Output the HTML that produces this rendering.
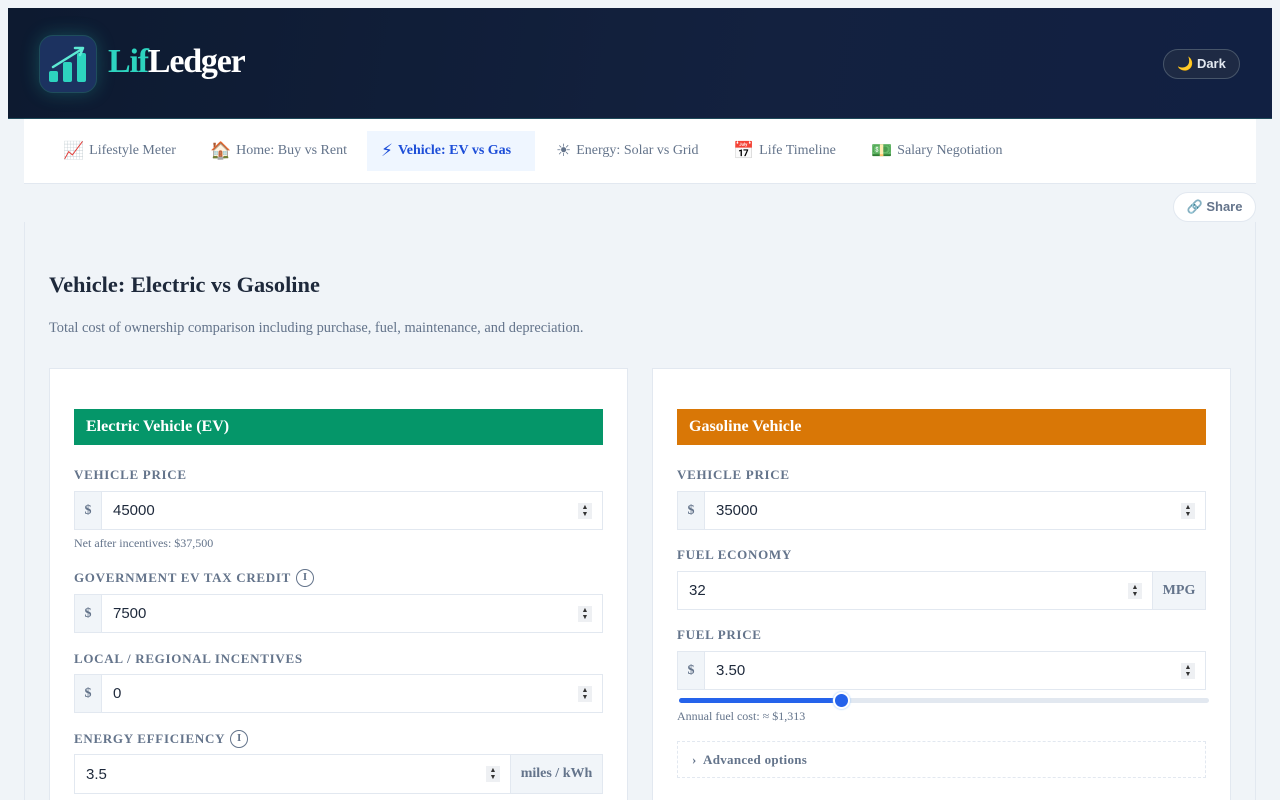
<!DOCTYPE html>
<html style="width:1280px;height:800px;overflow:hidden"><head><meta charset="utf-8"><style>
*{box-sizing:border-box;margin:0;padding:0}
body{width:1280px;height:800px;overflow:hidden;background:#f0f4f8;font-family:"Liberation Serif",serif;position:relative}
.abs{position:absolute}
header{position:absolute;left:8px;top:8px;width:1264px;height:111px;background:linear-gradient(100deg,#0d1a30,#13213f 60%,#112042);border-bottom:1px solid #1f4a5a}
.logo{left:31px;top:27px;width:58px;height:58px;border-radius:14px;background:#1c3260;border:1px solid #1f4d5c;box-shadow:0 0 18px rgba(45,212,191,.25)}
.brand{left:100px;top:35px;font-size:34px;font-weight:bold;color:#fff;letter-spacing:-1.2px}
.brand span{color:#2dd4bf}
.dark{left:1155px;top:41px;width:77px;height:30px;border-radius:15px;border:1px solid #475569;background:#1e2a44;color:#e2e8f0;font:bold 13px "Liberation Sans",sans-serif;display:flex;align-items:center;justify-content:center}
nav{position:absolute;left:24px;top:119px;width:1232px;height:65px;background:#fff;border-bottom:1px solid #e2e8f0}
.tab{position:absolute;top:12px;height:40px;display:flex;align-items:center;font-size:14px;color:#64748b;padding:0 14px}
.tab i{font-style:normal;font-size:17px;margin-right:5px;font-family:"DejaVu Sans",sans-serif}
.tab.on{background:#eff6ff;color:#1d4ed8;font-weight:bold}
.share{left:1173px;top:192px;width:83px;height:30px;border-radius:15px;background:#fff;border:1px solid #e2e8f0;color:#64748b;font:bold 13px "Liberation Sans",sans-serif;display:flex;align-items:center;justify-content:center}
.panel{left:24px;top:222px;width:1232px;height:600px;border-left:1px solid #e2e8f0;border-right:1px solid #e2e8f0}
h2{position:absolute;left:49px;top:272px;font-size:22.4px;color:#1e293b}
.desc{left:49px;top:320px;font-size:14.4px;color:#64748b}
.card{position:absolute;top:368px;width:579px;height:440px;background:#fff;border:1px solid #e2e8f0}
.bar{position:absolute;left:24px;top:40px;width:529px;height:36px;color:#fff;font-size:16px;font-weight:bold;padding-left:12px;line-height:36px}
.lbl{position:absolute;left:24px;font-size:13px;font-weight:bold;color:#64748b;letter-spacing:0.7px;display:flex;align-items:center}
.lbl b{display:inline-block;width:18px;height:18px;border:1.5px solid #64748b;border-radius:50%;font-size:11px;text-align:center;line-height:15px;margin-left:5px;letter-spacing:0}
.inp{position:absolute;left:24px;width:529px;height:39px;border:1px solid #e2e8f0;display:flex;background:#fff}
.pre{width:27px;background:#f1f5f9;border-right:1px solid #e2e8f0;color:#64748b;font-weight:bold;font-size:14px;display:flex;align-items:center;justify-content:center}
.val{flex:1;font:15px "Liberation Sans",sans-serif;color:#1e293b;padding-left:11px;display:flex;align-items:center;position:relative}
.spin{position:absolute;right:10px;top:11px;width:14px;height:16px;background:#eef0f3;font-size:7px;line-height:7px;text-align:center;color:#333;padding-top:1px}
.suf{background:#f1f5f9;border-left:1px solid #e2e8f0;color:#64748b;font-weight:bold;font-size:14px;display:flex;align-items:center;justify-content:center}
.hint{position:absolute;left:24px;font-size:12px;color:#64748b}
</style></head><body>
<header>
<div class="abs logo"><svg width="58" height="58" viewBox="0 0 58 58"><rect x="9" y="35" width="9" height="11" rx="2" fill="#2dd4bf"/><rect x="23" y="26" width="9" height="20" rx="2" fill="#2dd4bf"/><rect x="37" y="17" width="9" height="29" rx="2" fill="#2dd4bf"/><path d="M13 31 L42 13" stroke="#5eead4" stroke-width="2.5" stroke-linecap="round"/><path d="M35 12 L43 12 L40 19" stroke="#5eead4" stroke-width="2.5" fill="none" stroke-linecap="round" stroke-linejoin="round"/></svg></div>
<div class="abs brand"><span>Lif</span>Ledger</div>
<div class="abs dark">🌙 Dark</div>
</header>
<nav>
<div class="tab" style="left:25px"><i>📈</i>Lifestyle Meter</div>
<div class="tab" style="left:172px"><i>🏠</i>Home: Buy vs Rent</div>
<div class="tab on" style="left:343px;width:168px"><i>⚡</i>Vehicle: EV vs Gas</div>
<div class="tab" style="left:518px"><i>☀</i>Energy: Solar vs Grid</div>
<div class="tab" style="left:695px"><i>📅</i>Life Timeline</div>
<div class="tab" style="left:833px"><i>💵</i>Salary Negotiation</div>
</nav>
<div class="abs share">🔗 Share</div>
<div class="abs panel"></div>
<h2>Vehicle: Electric vs Gasoline</h2>
<div class="abs desc">Total cost of ownership comparison including purchase, fuel, maintenance, and depreciation.</div>

<div class="card" style="left:49px">
<div class="bar" style="background:#059669">Electric Vehicle (EV)</div>
<div class="lbl" style="top:98px">VEHICLE PRICE</div>
<div class="inp" style="top:122px"><div class="pre">$</div><div class="val">45000<div class="spin">▲<br>▼</div></div></div>
<div class="hint" style="top:167px">Net after incentives: $37,500</div>
<div class="lbl" style="top:200px">GOVERNMENT EV TAX CREDIT <b>I</b></div>
<div class="inp" style="top:225px"><div class="pre">$</div><div class="val">7500<div class="spin">▲<br>▼</div></div></div>
<div class="lbl" style="top:282px">LOCAL / REGIONAL INCENTIVES</div>
<div class="inp" style="top:305px"><div class="pre">$</div><div class="val">0<div class="spin">▲<br>▼</div></div></div>
<div class="lbl" style="top:361px">ENERGY EFFICIENCY <b>I</b></div>
<div class="inp" style="top:385px;height:40px"><div class="val">3.5<div class="spin">▲<br>▼</div></div><div class="suf" style="width:92px">miles / kWh</div></div>
</div>

<div class="card" style="left:652px">
<div class="bar" style="background:#d97706">Gasoline Vehicle</div>
<div class="lbl" style="top:98px">VEHICLE PRICE</div>
<div class="inp" style="top:122px"><div class="pre">$</div><div class="val">35000<div class="spin">▲<br>▼</div></div></div>
<div class="lbl" style="top:178px">FUEL ECONOMY</div>
<div class="inp" style="top:202px"><div class="val">32<div class="spin">▲<br>▼</div></div><div class="suf" style="width:53px">MPG</div></div>
<div class="lbl" style="top:258px">FUEL PRICE</div>
<div class="inp" style="top:282px"><div class="pre">$</div><div class="val">3.50<div class="spin">▲<br>▼</div></div></div>
<div class="abs" style="left:26px;top:329px;width:530px;height:5px;border-radius:3px;background:#e2e8f0"></div>
<div class="abs" style="left:26px;top:329px;width:162px;height:5px;border-radius:3px;background:#2563eb"></div>
<div class="abs" style="left:180px;top:323px;width:17px;height:17px;border-radius:50%;background:#2563eb;border:2px solid #fff;box-shadow:0 0 2px #93c5fd"></div>
<div class="hint" style="top:340px">Annual fuel cost: ≈ $1,313</div>
<div class="abs" style="left:24px;top:372px;width:529px;height:37px;border:1px dashed #e2e8f0;font-size:13px;font-weight:bold;color:#64748b;padding-left:14px;line-height:35px;letter-spacing:0.3px">›&nbsp; Advanced options</div>
</div>
</body></html>
